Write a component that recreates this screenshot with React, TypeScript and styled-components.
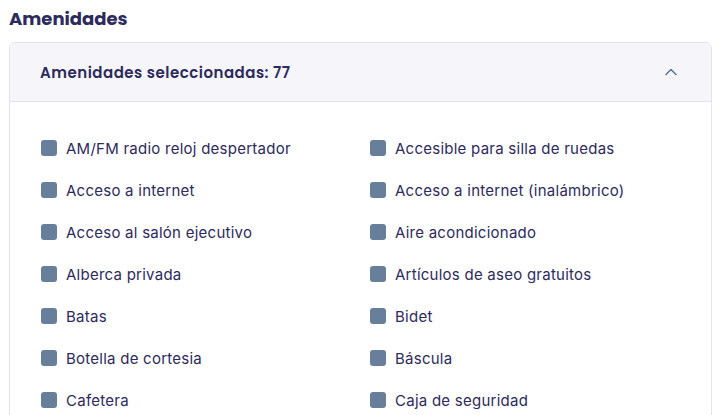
import styled, { createGlobalStyle } from "styled-components";

const GlobalStyle = createGlobalStyle`
  body {
    margin: 0;
    background: #ffffff;
    font-family: Inter, "Liberation Sans", sans-serif;
  }
`;

const Page = styled.div`
  padding: 8px 13px 0 9px;
`;

const Title = styled.h2`
  margin: 0 0 12px;
  font-family: Poppins, "Noto Sans", Inter, sans-serif;
  font-size: 18px;
  font-weight: 650;
  line-height: 22px;
  color: #2d2a5c;
`;

const Card = styled.div`
  border: 1px solid #e3e3ef;
  border-radius: 6px;
  overflow: hidden;
  width: 701px;
`;

const Header = styled.div`
  display: flex;
  align-items: center;
  justify-content: space-between;
  height: 58px;
  padding: 0 30px 0 30px;
  background: #f5f5fa;
  border-bottom: 1px solid #e3e3ef;
`;

const HeaderTitle = styled.span`
  font-family: Poppins, "Noto Sans", Inter, sans-serif;
  font-size: 15px;
  font-weight: 600;
  letter-spacing: 0.5px;
  color: #2d2a5c;
`;

const Body = styled.div`
  display: grid;
  grid-template-columns: 329px 1fr;
  padding: 25px 30px 0 31px;
`;

const Item = styled.label`
  display: flex;
  align-items: center;
  gap: 9px;
  height: 42px;
  font-size: 15px;
  letter-spacing: 0.25px;
  color: #2d2a5c;
`;

const Box = styled.span`
  width: 16px;
  height: 16px;
  border-radius: 3px;
  background: #687f9c;
  flex-shrink: 0;
`;

const amenities = [
  "AM/FM radio reloj despertador",
  "Accesible para silla de ruedas",
  "Acceso a internet",
  "Acceso a internet (inalámbrico)",
  "Acceso al salón ejecutivo",
  "Aire acondicionado",
  "Alberca privada",
  "Artículos de aseo gratuitos",
  "Batas",
  "Bidet",
  "Botella de cortesia",
  "Báscula",
  "Cafetera",
  "Caja de seguridad",
];

export default function App() {
  return (
    <>
      <GlobalStyle />
      <Page>
        <Title>Amenidades</Title>
        <Card>
          <Header>
            <HeaderTitle>Amenidades seleccionadas: 77</HeaderTitle>
            <svg width="20" height="20" viewBox="0 0 24 24" fill="none" stroke="#5b7590" strokeWidth="1.8" strokeLinecap="round" strokeLinejoin="round">
              <path d="M6 15l6-6 6 6" />
            </svg>
          </Header>
          <Body>
            {amenities.map((a) => (
              <Item key={a}>
                <Box />
                {a}
              </Item>
            ))}
          </Body>
        </Card>
      </Page>
    </>
  );
}
